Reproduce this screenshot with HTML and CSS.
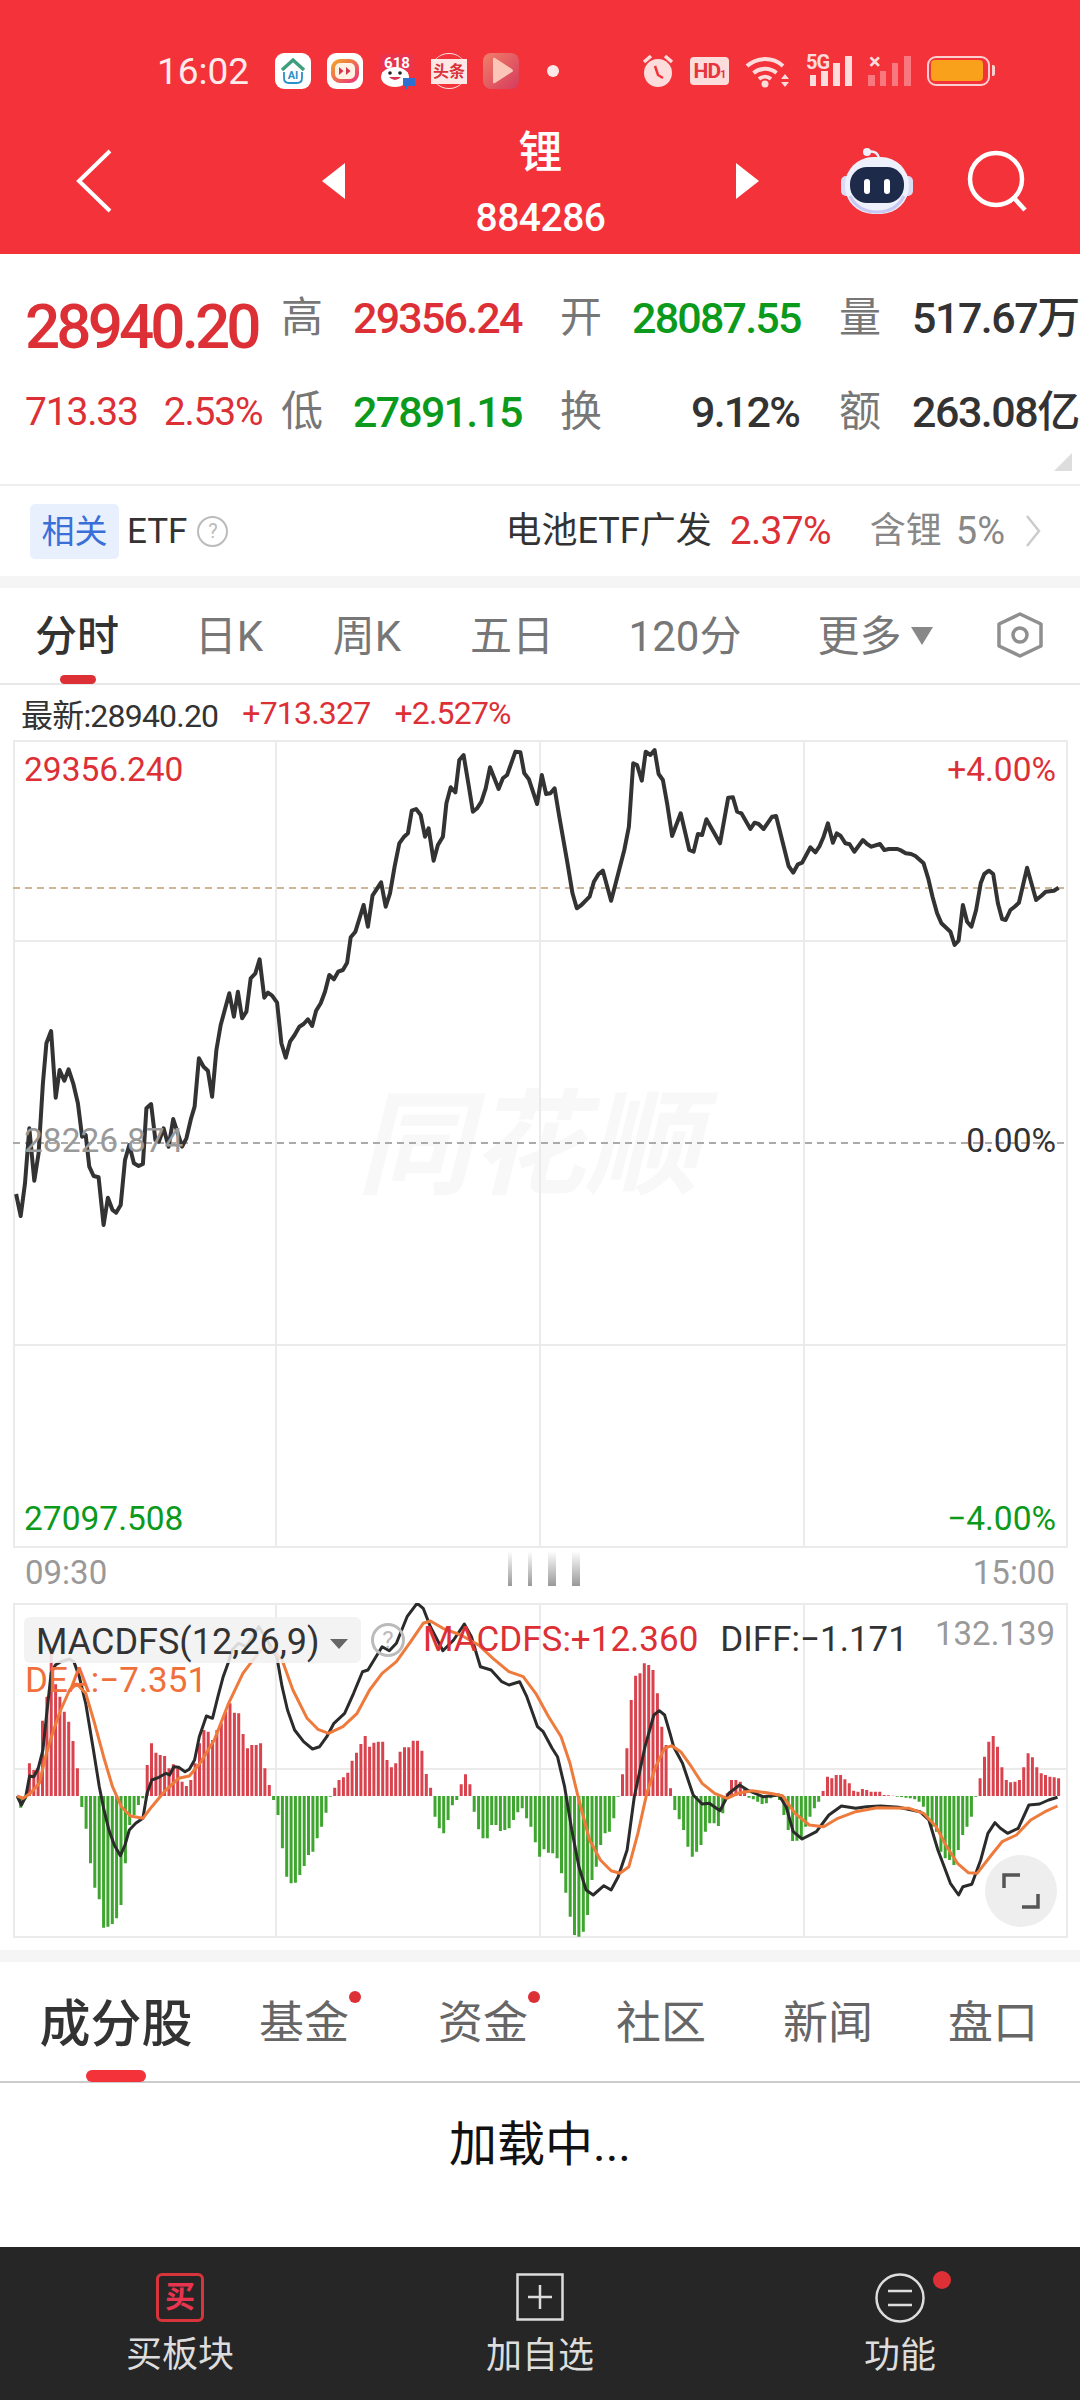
FILE: index.html
```html
<!DOCTYPE html>
<html lang="zh-CN">
  <head>
    <meta charset="UTF-8" />
    <meta name="viewport" content="width=device-width, initial-scale=1.0" />
    <title>锂 884286</title>
    <link rel="stylesheet" href="styles.css">
  </head>
  <body>
    <header class="top">
      <div class="status">
        <span class="clock">16:02</span>
        <div class="notifs">
          <svg class="app" viewBox="0 0 36 36"><rect width="36" height="36" rx="9" fill="#fff"/><path d="M7 17 18 7l11 10" fill="none" stroke="#3f9e7c" stroke-width="3.500"/><path d="M9 19v6q0 5 5 5h8q5 0 5-5v-6" fill="none" stroke="#2b8fc9" stroke-width="1.800"/><text class="app-ai" x="18" y="26" text-anchor="middle">AI</text></svg>
          <svg class="app" viewBox="0 0 36 36"><defs><linearGradient id="ring" x1="0" y1="0" x2="1" y2="1"><stop offset="0" stop-color="#f3a12a"/><stop offset="1" stop-color="#ea3a78"/></linearGradient></defs><rect width="36" height="36" rx="9" fill="#fff"/><rect x="6" y="8" width="24" height="20" rx="7" fill="#fff3e6" stroke="url(#ring)" stroke-width="4"/><path d="M12 14l4.500 4-4.500 4zM19 14l4.500 4-4.500 4z" fill="#d8344e"/></svg>
          <svg class="app" viewBox="0 0 36 36"><path d="M6 1h24q5 0 5 5v12H1V6q0-5 5-5z" fill="#e8344e"/><text class="app-618" x="18" y="15" text-anchor="middle">618</text><ellipse cx="16" cy="24" rx="14" ry="10" fill="#fff"/><path d="M3 19l6 3-5 4zM29 19l-6 3 5 4z" fill="#fff"/><circle cx="11" cy="20" r="1.800" fill="#222"/><circle cx="21" cy="20" r="1.800" fill="#222"/><path d="M10 24q6 6 12 0z" fill="#d8344e"/><rect x="24" y="25" width="12" height="8" fill="#2f6fd0"/><path d="M26 33h2v3h-2z" fill="#2f6fd0"/></svg>
          <div class="app toutiao"><span>头条</span></div>
          <svg class="app" viewBox="0 0 36 36"><defs><linearGradient id="play" x1="0" y1="0" x2="1" y2="1"><stop offset="0" stop-color="#f0806a"/><stop offset="1" stop-color="#d63a5c"/></linearGradient></defs><rect width="36" height="36" rx="8" fill="url(#play)"/><path d="M10 6q0-2 2-1l17 11q2 2 0 3L12 30q-2 1-2-1z" fill="#fbc6b8"/></svg>
          <span class="dot"></span>
        </div>
        <div class="sys">
          <svg width="32" height="34" viewBox="0 0 32 34"><circle cx="16" cy="19" r="14" fill="#fddcdc"/><path d="M13 12l3 9 5 3" fill="none" stroke="#f3323a" stroke-width="2.500"/><path d="M2 8 9 2M30 8l-7-6" stroke="#fddcdc" stroke-width="3.500"/></svg>
          <div class="hd">HD<small>1</small></div>
          <svg width="45" height="34" viewBox="0 0 45 34"><path d="M2 12a27 27 0 0 1 36 0M8.500 19a18 18 0 0 1 23 0M14 25a9.500 9.500 0 0 1 12 0" fill="none" stroke="#fddcdc" stroke-width="4"/><circle cx="20" cy="30" r="3.500" fill="#fddcdc"/><path d="M36 25l4-5 4 5zM36 28l4 5 4-5z" fill="#fddcdc"/></svg>
          <div class="sig">
            <span class="sig-tag">5G</span>
            <svg width="46" height="30" viewBox="0 0 46 30"><path d="M4 19h6v11H4zM15 15h7v15h-7zM27 7h7v23h-7zM39 0h7v30h-7z" fill="#fddcdc"/></svg>
          </div>
          <div class="sig dim">
            <span class="sig-tag">×</span>
            <svg width="43" height="30" viewBox="0 0 43 30"><path d="M0 19h7v11H0zM12 15h6v15h-6zM24 7h6v23h-6zM36 0h7v30h-7z" fill="#f9777f"/></svg>
          </div>
          <div class="battery"><span class="fill"></span></div>
        </div>
      </div>
      <nav class="nav">
        <svg class="back" width="36" height="64" viewBox="0 0 36 64"><path d="M34 2 3 32l31 30" fill="none" stroke="#fff" stroke-width="4"/></svg>
        <span class="tri tri-l"></span>
        <div class="title">
          <div class="name">锂</div>
          <div class="code">884286</div>
        </div>
        <span class="tri tri-r"></span>
        <svg class="robot" width="72" height="66" viewBox="0 0 72 66"><path d="M26 4q10-2 12 6" fill="none" stroke="#eef0fb" stroke-width="2.500"/><circle cx="26" cy="4" r="4" fill="#eef0fb"/><rect x="0" y="28" width="72" height="20" rx="5" fill="#d9dcf5"/><rect x="4" y="9" width="64" height="57" rx="28" fill="#eef0fb"/><path d="M9 48q8 16 27 16t27-16" fill="none" stroke="#c9c8f2" stroke-width="3"/><rect x="9" y="19" width="54" height="36" rx="17" fill="#1e2a4a"/><rect x="23" y="31" width="6" height="15" rx="3" fill="#fff"/><rect x="43" y="31" width="6" height="15" rx="3" fill="#fff"/></svg>
        <svg class="search" width="62" height="62" viewBox="0 0 62 62"><circle cx="29" cy="29" r="26" fill="none" stroke="#fff" stroke-width="4.500"/><path d="M48 49l10 11" stroke="#fff" stroke-width="4.500"/></svg>
      </nav>
    </header>

    <section class="quote">
      <div class="price">28940.20</div>
      <div class="lbl">高</div><div class="val red">29356.24</div>
      <div class="lbl">开</div><div class="val green">28087.55</div>
      <div class="lbl">量</div><div class="val end">517.67万</div>
      <div class="change"><span>713.33</span><span>2.53%</span></div>
      <div class="lbl">低</div><div class="val green">27891.15</div>
      <div class="lbl">换</div><div class="val dark">9.12%</div>
      <div class="lbl">额</div><div class="val end">263.08亿</div>
      <span class="corner"></span>
    </section>

    <section class="etf">
      <span class="badge">相关</span>
      <span class="etf-name">ETF</span>
      <span class="help">?</span>
      <div class="etf-right">
        <span class="etf-fund">电池ETF广发</span>
        <span class="etf-pct">2.37%</span>
        <span class="etf-has">含锂</span>
        <span class="etf-share">5%</span>
        <svg width="16" height="32" viewBox="0 0 16 32"><path d="M2 1l12 15L2 31" fill="none" stroke="#ccc" stroke-width="2.500"/></svg>
      </div>
    </section>
    <div class="band"></div>

    <section class="period-tabs">
      <span class="ptab on">分时</span>
      <span class="ptab">日K</span>
      <span class="ptab">周K</span>
      <span class="ptab">五日</span>
      <span class="ptab">120分</span>
      <span class="ptab more">更多<i></i></span>
      <span class="ptab"><svg width="46" height="46" viewBox="0 0 46 46"><path d="M23 2 44 12v22L23 44 2 34V12z" fill="none" stroke="#8f8f8f" stroke-width="3.500" stroke-linejoin="round"/><circle cx="23" cy="23" r="7" fill="none" stroke="#8f8f8f" stroke-width="3.500"/></svg></span>
    </section>

    <div class="latest">
      <span>最新:28940.20</span>
      <span class="red">+713.327</span>
      <span class="red">+2.527%</span>
    </div>

    <section class="chart">
      <div class="watermark">同花顺</div>
      <svg class="plot" viewBox="13 740 1055 808">
        <g class="grid">
          <rect x="14" y="741" width="1053" height="806"/>
          <path d="M276 740v808M540 740v808M804 740v808M13 941h1055M13 1345h1055"/>
        </g>
        <path class="dash tan" d="M13 888h1055"/>
        <path class="dash" d="M13 1143h1055"/>
        <polyline id="price-line" class="line-price"/>
      </svg>
      <span class="tag tl red">29356.240</span>
      <span class="tag tr red">+4.00%</span>
      <span class="tag ml grey">28226.874</span>
      <span class="tag mr dark">0.00%</span>
      <span class="tag bl green">27097.508</span>
      <span class="tag br green">−4.00%</span>
    </section>

    <div class="times">
      <span>09:30</span>
      <div class="grip"><i></i><i></i><i class="wide"></i><i class="wide"></i></div>
      <span>15:00</span>
    </div>

    <section class="macd">
      <svg class="plot" viewBox="13 1603 1055 335">
        <g class="grid">
          <rect x="14" y="1604" width="1053" height="333"/>
          <path d="M276 1603v335M540 1603v335M804 1603v335M13 1769h1055"/>
        </g>
        <g id="macd-bars"></g>
        <polyline id="macd-diff" class="line-diff"/>
        <polyline id="macd-dea" class="line-dea"/>
      </svg>
      <div class="macd-legend">
        <div class="macd-select">MACDFS(12,26,9)<i></i></div>
        <span class="help big">?</span>
        <span class="red macd-val">MACDFS:+12.360</span>
        <span class="macd-diff">DIFF:−1.171</span>
      </div>
      <span class="macd-dea">DEA:−7.351</span>
      <span class="macd-max">132.139</span>
      <div class="expand"><svg width="38" height="36" viewBox="0 0 38 36"><path d="M2 15V2h16M36 21v13H20" fill="none" stroke="#555" stroke-width="3.500"/></svg></div>
    </section>
    <div class="band band-low"></div>

    <section class="info-tabs">
      <span class="itab on">成分股</span>
      <span class="itab new">基金</span>
      <span class="itab new">资金</span>
      <span class="itab">社区</span>
      <span class="itab">新闻</span>
      <span class="itab">盘口</span>
    </section>

    <div class="loading">加载中...</div>

    <footer class="bottom">
      <div class="action">
        <div class="buy-icon">买</div>
        <span class="action-text">买板块</span>
      </div>
      <div class="action">
        <svg class="add-icon" width="48" height="48" viewBox="0 0 48 48"><rect x="1.500" y="1.500" width="45" height="45" fill="none" stroke="#ddd" stroke-width="2.500"/><path d="M24 12v24M12 24h24" stroke="#ddd" stroke-width="2.500"/></svg>
        <span class="action-text">加自选</span>
      </div>
      <div class="action has-dot">
        <svg width="50" height="50" viewBox="0 0 50 50"><circle cx="25" cy="25" r="23.500" fill="none" stroke="#ddd" stroke-width="2.500"/><path d="M13 18h24M13 32h24" stroke="#ddd" stroke-width="2.500"/></svg>
        <span class="action-text">功能</span>
      </div>
    </footer>

    <script src="chart.js"></script>
  </body>
</html>
```

FILE: styles.css
```css
* {
  box-sizing: border-box;
}

body {
  margin: 0;
  width: 1080px;
  height: 2400px;
  overflow: hidden;
  background: #fff;
  font-family: Roboto, "Noto Sans CJK SC", sans-serif;
  color: #222;
}

.red {
  color: #dc3036;
}

.green {
  color: #0b9a1c;
}

.dark {
  color: #333;
}

.grey {
  color: #999;
}

/* header */
.top {
  height: 254px;
  background: #f3323a;
  color: #fff;
}

.status {
  height: 108px;
  padding: 34px 87px 0 157px;
  display: flex;
  align-items: center;
}

.clock {
  width: 94px;
  font-size: 37px;
  color: #fdeaea;
}

.notifs {
  margin-left: 24px;
  display: flex;
  align-items: center;
  gap: 16px;
}

.app {
  display: block;
  width: 36px;
  height: 36px;
}

.app-ai {
  font-size: 11px;
  font-weight: 700;
  fill: #2b8fc9;
}

.app-618 {
  font-size: 15px;
  font-weight: 700;
  fill: #fff;
}

.toutiao {
  border-radius: 50%;
  border-top: 1px solid #fde0e0;
  border-bottom: 1px solid #fde0e0;
  display: flex;
  align-items: center;
  justify-content: center;
}

.toutiao span {
  width: 100%;
  background: #fde8e8;
  text-align: center;
  font-size: 16px;
  font-weight: 700;
  line-height: 25px;
  color: #d8343c;
  white-space: nowrap;
}

.dot {
  width: 12px;
  height: 12px;
  margin-left: 12px;
  border-radius: 50%;
  background: #fde8e8;
}

.sys {
  margin-left: auto;
  display: flex;
  align-items: center;
  gap: 16px;
}

.hd {
  width: 39px;
  height: 28px;
  border-radius: 4px;
  background: #fddcdc;
  color: #e8343c;
  font-size: 21px;
  font-weight: 700;
  line-height: 28px;
  text-align: center;
  letter-spacing: -1px;
  white-space: nowrap;
}

.hd small {
  font-size: 11px;
}

.sig {
  position: relative;
  display: flex;
}

.sig-tag {
  position: absolute;
  left: 0;
  top: -2px;
  font-size: 20px;
  font-weight: 700;
  line-height: 16px;
  color: #fddcdc;
  letter-spacing: -1px;
}

.sig.dim .sig-tag {
  left: 1px;
  font-size: 22px;
}

.battery {
  position: relative;
  width: 63px;
  height: 30px;
  border: 2.500px solid #fbd0d0;
  border-radius: 9px;
  padding: 2px;
  margin-right: 3px;
}

.battery::after {
  content: "";
  position: absolute;
  right: -7px;
  top: 7px;
  width: 3px;
  height: 11px;
  border-radius: 0 2px 2px 0;
  background: #fbd0d0;
}

.fill {
  display: block;
  width: 52px;
  height: 21px;
  border-radius: 4px;
  background: #f9a11b;
}

.nav {
  height: 146px;
  padding-left: 76px;
  display: flex;
  align-items: center;
}

.tri {
  width: 0;
  height: 0;
  border-top: 18px solid transparent;
  border-bottom: 18px solid transparent;
}

.tri-l {
  margin-left: 210px;
  border-right: 23px solid #fff;
}

.tri-r {
  border-left: 23px solid #fff;
}

.title {
  width: 391px;
  text-align: center;
}

.name {
  font-size: 44px;
  font-weight: 500;
  line-height: 56px;
}

.code {
  margin-top: 17px;
  font-size: 39px;
  font-weight: 500;
  line-height: 40px;
  letter-spacing: -0.500px;
}

.robot {
  margin-left: 82px;
}

.search {
  margin-left: 54px;
}

/* quote panel */
.quote {
  position: relative;
  height: 232px;
  padding: 17px 0 0 25px;
  border-bottom: 2px solid #eee;
  display: grid;
  grid-template-columns: 256px 72px 207px 72px 207px 73px 1fr;
  grid-template-rows: 94px 94px;
  align-items: center;
}

.price {
  font-size: 62px;
  font-weight: 500;
  letter-spacing: -3.900px;
  color: #dc3036;
  line-height: 60px;
  padding-top: 18px;
}

.change {
  display: flex;
  gap: 26px;
  font-size: 39px;
  letter-spacing: -1.200px;
  color: #dc3036;
}

.lbl {
  font-size: 42px;
  color: #777;
  line-height: 50px;
}

.val {
  font-size: 43px;
  font-weight: 500;
  letter-spacing: -1.800px;
  line-height: 50px;
  text-align: right;
  padding-right: 40px;
  white-space: nowrap;
}

.val.end {
  padding: 0;
  text-align: left;
  letter-spacing: -1.500px;
  color: #333;
}

.corner {
  position: absolute;
  right: 8px;
  bottom: 13px;
  width: 0;
  height: 0;
  border-left: 18px solid transparent;
  border-bottom: 18px solid #ddd;
}

/* etf row */
.etf {
  height: 90px;
  padding: 0 39px 0 30px;
  display: flex;
  align-items: center;
}

.badge {
  width: 89px;
  height: 55px;
  border-radius: 5px;
  background: #e8f0fd;
  color: #3a6fd8;
  font-size: 33px;
  line-height: 55px;
  text-align: center;
}

.etf-name {
  margin-left: 8px;
  font-size: 35px;
  color: #333;
}

.help {
  width: 31px;
  height: 31px;
  margin-left: 10px;
  border: 2px solid #bbb;
  border-radius: 50%;
  color: #bbb;
  font-size: 20px;
  line-height: 27px;
  text-align: center;
}

.etf-right {
  margin-left: auto;
  display: flex;
  align-items: center;
}

.etf-fund {
  font-size: 36px;
  line-height: 50px;
  color: #333;
}

.etf-pct {
  margin-left: 18px;
  font-size: 39px;
  letter-spacing: -0.700px;
  line-height: 50px;
  color: #dc3036;
}

.etf-has {
  margin-left: 39px;
  font-size: 36px;
  line-height: 50px;
  color: #888;
}

.etf-share {
  margin-left: 14px;
  font-size: 38px;
  line-height: 50px;
  color: #888;
}

.etf-right svg {
  margin-left: 20px;
}

.band {
  height: 12px;
  background: #f5f5f5;
}

/* period tabs */
.period-tabs {
  height: 97px;
  padding-top: 3px;
  border-bottom: 2px solid #e8e8e8;
  display: grid;
  grid-template-columns: 154px 150px 126px 164px 182px 198px 92px;
  align-items: center;
}

.ptab {
  position: relative;
  height: 60px;
  font-size: 42px;
  line-height: 60px;
  color: #777;
  text-align: center;
  white-space: nowrap;
}

.ptab.on {
  color: #333;
  font-weight: 500;
}

.ptab.on::after {
  content: "";
  position: absolute;
  left: 60px;
  bottom: -17px;
  width: 36px;
  height: 9px;
  border-radius: 5px;
  background: #dc3036;
}

.ptab svg {
  display: block;
  margin: 5px auto 0;
}

.more i {
  display: inline-block;
  margin-left: 9px;
  vertical-align: 6px;
  border-top: 18px solid #888;
  border-left: 11px solid transparent;
  border-right: 11px solid transparent;
}

.latest {
  height: 55px;
  padding-left: 21px;
  display: flex;
  align-items: center;
  gap: 24px;
  font-size: 32px;
  letter-spacing: -0.800px;
  color: #333;
}

/* charts */
.chart {
  position: relative;
  height: 808px;
  margin-left: 13px;
  width: 1055px;
}

.plot {
  position: absolute;
  inset: 0;
  display: block;
  width: 100%;
  height: 100%;
}

.grid rect,
.grid path {
  fill: none;
  stroke: #ebebeb;
  stroke-width: 2;
}

.dash {
  stroke: #aaa;
  stroke-width: 2;
  stroke-dasharray: 7 5;
}

.dash.tan {
  stroke: #cdb595;
}

.line-price {
  fill: none;
  stroke: #333;
  stroke-width: 4;
  stroke-linejoin: round;
}

.line-diff {
  fill: none;
  stroke: #2b2b2b;
  stroke-width: 3;
  stroke-linejoin: round;
}

.line-dea {
  fill: none;
  stroke: #ee7a3c;
  stroke-width: 3;
  stroke-linejoin: round;
}

.watermark {
  position: absolute;
  left: 344px;
  top: 341px;
  font-size: 114px;
  font-weight: 700;
  font-style: italic;
  line-height: 130px;
  color: #f8f8f8;
  white-space: nowrap;
}

.tag {
  position: absolute;
  font-size: 33.500px;
  line-height: 40px;
  white-space: nowrap;
}

.tl,
.ml,
.bl {
  left: 11px;
}

.tr,
.mr,
.br {
  right: 12px;
}

.tl,
.tr {
  top: 10px;
}

.ml,
.mr {
  top: 381px;
}

.bl,
.br {
  top: 759px;
}

.times {
  position: relative;
  height: 55px;
  padding: 0 25px 6px 25px;
  display: flex;
  justify-content: space-between;
  align-items: center;
  font-size: 33px;
  color: #999;
}

.grip {
  position: absolute;
  left: 508px;
  top: 3px;
  height: 35px;
  display: flex;
  gap: 16px;
}

.grip i {
  width: 4px;
  background: linear-gradient(to bottom, rgba(150, 150, 150, 0), #999);
}

.grip i.wide {
  width: 8px;
}

.macd {
  position: relative;
  height: 335px;
  margin-left: 13px;
  width: 1055px;
}

.macd-legend {
  position: absolute;
  left: 11px;
  top: 12px;
  display: flex;
  align-items: center;
  font-size: 35px;
  white-space: nowrap;
}

.macd-select {
  width: 337px;
  height: 46px;
  padding-left: 12px;
  border-radius: 6px;
  background: rgba(241, 241, 241, 0.88);
  font-size: 36px;
  line-height: 50px;
  color: #333;
}

.macd-select i {
  display: inline-block;
  margin-left: 10px;
  vertical-align: 5px;
  border-top: 10px solid #666;
  border-left: 9px solid transparent;
  border-right: 9px solid transparent;
}

.help.big {
  width: 34px;
  height: 34px;
  margin-left: 10px;
  border-width: 3px;
  font-size: 24px;
  line-height: 28px;
}

.macd-val {
  margin-left: 18px;
  line-height: 50px;
}

.macd-diff {
  margin-left: 22px;
  line-height: 50px;
  color: #333;
}

.macd-dea {
  position: absolute;
  left: 12px;
  top: 55px;
  font-size: 35px;
  line-height: 46px;
  color: #f0703c;
}

.macd-max {
  position: absolute;
  right: 13px;
  top: 9px;
  font-size: 33px;
  line-height: 44px;
  color: #999;
}

.expand {
  position: absolute;
  left: 972px;
  top: 252px;
  width: 72px;
  height: 72px;
  border-radius: 50%;
  background: #eee;
  display: flex;
  align-items: center;
  justify-content: center;
}

.band-low {
  margin-top: 12px;
}

/* lower tabs */
.info-tabs {
  height: 121px;
  padding-bottom: 4px;
  border-bottom: 2px solid #ccc;
  position: relative;
  display: grid;
  grid-template-columns: 232px 144px 214px 142px 192px 138px;
  align-items: center;
}

.itab {
  position: relative;
  font-size: 45px;
  color: #666;
  text-align: center;
  white-space: nowrap;
}

.itab.on {
  font-size: 51px;
  font-weight: 500;
  color: #333;
}

.itab.on::after {
  content: "";
  position: absolute;
  left: 86px;
  bottom: -25px;
  width: 60px;
  height: 12px;
  border-radius: 6px;
  background: #f3323a;
}

.itab.new::after {
  content: "";
  position: absolute;
  left: calc(50% + 45px);
  top: 4px;
  width: 12px;
  height: 12px;
  border-radius: 50%;
  background: #dc3036;
}

.loading {
  height: 164px;
  padding-top: 26px;
  text-align: center;
  font-size: 48px;
  line-height: 72px;
  color: #111;
}

/* footer */
.bottom {
  height: 153px;
  padding-top: 26px;
  background: #262626;
  display: grid;
  grid-template-columns: repeat(3, 360px);
}

.action {
  position: relative;
  display: flex;
  flex-direction: column;
  align-items: center;
}

.action svg,
.buy-icon {
  display: block;
  flex: none;
}

.add-icon {
  margin-bottom: 2px;
}

.buy-icon {
  width: 48px;
  height: 49px;
  border: 3px solid #d8343c;
  border-radius: 6px;
  color: #e8344e;
  font-size: 30px;
  font-weight: 700;
  line-height: 42px;
  text-align: center;
}

.action-text {
  margin-top: 10px;
  font-size: 36px;
  line-height: 46px;
  color: #ddd;
}

.has-dot::after {
  content: "";
  position: absolute;
  left: 213px;
  top: -2px;
  width: 18px;
  height: 18px;
  border-radius: 50%;
  background: #dc3036;
}
```

FILE: chart.js
```js
// points are read off the reference crops: x in crop px (2.8 per page px), y in crop px (3 per page px)
const priceA = [45,1392,58,1458,70,1360,82,1195,96,1352,108,1270,120,1060,130,940,143,903,156,1103,167,1020,180,1052,192,1018,205,1060,218,1120,230,1220,240,1215,250,1310,262,1338,276,1342,290,1485,302,1403,315,1440,325,1448,338,1425,350,1290,362,1245,375,1300,388,1308,400,1302,410,1135,423,1122,435,1230,445,1235,458,1195,472,1250,485,1167,510,1250,522,1225,535,1165,545,1130,557,985,570,1010,582,1022,594,1100,606,960,618,885,642,790,655,860,666,785,678,865,690,845,702,745,715,730,727,688,740,803,750,788,762,797,776,818,788,940,800,983,812,935,825,915,838,890,850,882,862,868,874,888,885,842,898,820,910,785,922,735,935,748,947,725,960,720,972,698,982,622,995,605,1018,525,1030,590,1043,497,1067,457,1080,530,1092,490,1105,410,1118,340,1130,322,1142,310,1153,242,1165,237,1178,255,1190,320,1200,295,1214,392,1226,345,1240,320,1250,220,1262,172,1275,187,1286,90,1298,75,1312,165,1324,245,1336,235,1348,215,1360,175,1372,112,1396,177,1408,145,1420,135,1443,65,1457,67];
const priceB = [12,130,25,148,48,222,61,135,73,192,85,190,97,175,110,260,133,400,147,490,159,535,172,525,195,500,207,455,220,432,232,422,255,512,268,460,292,360,305,290,317,100,328,105,341,152,352,65,365,75,377,60,388,132,400,150,412,220,426,318,450,250,474,360,486,365,498,312,510,315,522,268,560,340,583,203,596,202,608,245,620,250,645,297,657,278,668,282,682,297,706,260,717,258,752,408,765,428,778,403,790,398,813,352,827,367,838,350,850,320,862,280,876,338,887,310,898,318,911,340,923,343,936,365,960,330,972,342,984,350,1008,342,1020,360,1033,357,1057,357,1068,362,1080,370,1095,372,1107,378,1130,400,1143,445,1155,500,1168,550,1180,580,1205,605,1217,645,1228,632,1240,525,1252,575,1264,590,1277,540,1290,460,1300,432,1313,422,1325,432,1338,520,1350,567,1360,570,1373,540,1385,530,1397,518,1420,413,1445,510,1460,497,1472,485,1495,482,1508,473];

const diffA = [48,798,60,825,72,800,83,738,95,740,107,715,120,660,130,560,143,430,155,405,170,395,195,387,207,395,222,440,240,520,260,650,278,770,290,835,305,900,320,945,337,977,350,945,362,900,380,880,400,865,412,790,425,750,445,742,465,730,475,735,487,710,500,712,518,725,530,718,545,690,558,620,578,558,595,565,610,500,625,440,640,395,650,360,668,340,690,350,725,290,750,335,775,380,790,470,805,540,825,600,850,635,875,657,895,650,915,620,935,580,965,550,990,490,1015,425,1030,420,1070,350,1090,362,1110,340,1140,260,1168,220,1185,235,1205,290,1240,362,1270,330,1300,282,1320,320,1345,410,1375,420,1405,455,1425,465,1455,455,1475,500,1505,590];
const diffB = [65,605,90,655,105,680,125,770,145,900,165,1010,185,1080,205,1095,235,1067,255,1080,275,1040,300,960,320,800,350,650,375,555,390,542,405,555,420,610,430,650,455,700,485,795,510,822,530,820,560,842,585,790,615,765,640,782,680,800,725,795,745,830,765,905,790,927,830,905,865,855,900,828,940,835,970,830,1010,828,1060,832,1120,845,1145,870,1170,960,1205,1060,1228,1095,1240,1070,1265,1063,1290,990,1310,910,1330,878,1345,895,1365,910,1395,895,1425,825,1455,822,1480,810,1505,802];

const deaA = [48,798,65,805,85,790,110,760,130,670,150,600,170,540,195,480,215,462,240,490,265,580,290,680,315,770,340,830,365,858,400,865,425,830,460,785,500,745,530,738,560,700,600,630,640,520,680,430,730,360,760,355,790,390,820,480,860,565,890,598,920,610,960,590,1000,550,1035,480,1070,430,1110,395,1150,335,1185,280,1205,273,1240,295,1290,315,1340,345,1380,385,1425,425,1465,440,1500,490];
const deaB = [80,560,115,620,140,700,165,810,195,930,225,990,255,1022,280,1030,305,1010,330,910,355,790,380,710,405,655,425,647,450,665,480,710,510,760,545,790,580,805,610,790,650,782,700,790,735,797,770,850,810,885,850,890,890,865,940,845,1000,833,1090,835,1130,850,1165,890,1195,950,1225,1000,1255,1028,1280,1030,1320,975,1350,935,1390,915,1430,870,1470,845,1505,828];

// end of each histogram bar, crop px, zero line is 798
const bars = [833,808,700,720,715,572,500,370,463,500,545,575,633,715,831,896,1000,1073,1108,1193,1190,1182,1165,1125,1000,885,855,825,805,705,640,668,675,678,715,703,715,755,768,750,700,640,600,605,630,600,580,545,520,548,550,612,655,645,645,640,715,765,810,855,955,1040,1060,1058,1035,1008,975,965,925,890,848,800,773,750,742,728,692,668,642,618,650,638,635,635,690,712,700,665,652,652,632,632,662,732,773,860,895,910,870,826,810,763,733,763,845,898,925,925,885,885,903,900,895,870,847,835,865,890,937,980,958,968,970,985,1030,1088,1160,1215,1220,1205,1155,1050,1010,945,910,905,865,800,733,655,510,437,430,400,405,420,490,590,645,775,840,868,900,950,980,965,945,905,880,880,888,850,790,750,750,755,775,803,808,815,822,820,805,800,810,855,900,933,932,925,890,860,835,815,783,740,745,735,735,748,760,782,785,777,780,785,785,785,795,796,797,800,801,803,805,808,815,830,860,890,905,965,985,990,1005,960,915,890,860,800,745,680,635,618,650,712,750,757,755,750,712,670,682,712,730,735,740,742,745];

function toPoints(list, offsetX, top) {
  const out = [];
  for (let i = 0; i < list.length; i += 2) {
    out.push((list[i] / 2.8 + offsetX).toFixed(1) + "," + (list[i + 1] / 3 + top).toFixed(1));
  }
  return out;
}

function setLine(id, partA, partB, top) {
  const points = toPoints(partA, 0, top).concat(toPoints(partB, 520, top));
  document.getElementById(id).setAttribute("points", points.join(" "));
}

setLine("price-line", priceA, priceB, 730);
setLine("macd-diff", diffA, diffB, 1530);
setLine("macd-dea", deaA, deaB, 1530);

const barGroup = document.getElementById("macd-bars");
const step = (1058.6 - 20.7) / (bars.length - 1);
let barPaths = { up: "", down: "" };
bars.forEach((end, i) => {
  const x = (20.7 + i * step - 1.5).toFixed(1);
  const y = 1530 + end / 3;
  const key = end < 798 ? "up" : "down";
  barPaths[key] += "M" + x + " 1796V" + y.toFixed(1) + "h3V1796z";
});
[["up", "#d9434d"], ["down", "#3ea52e"]].forEach(([key, color]) => {
  const path = document.createElementNS("http://www.w3.org/2000/svg", "path");
  path.setAttribute("d", barPaths[key]);
  path.setAttribute("fill", color);
  barGroup.appendChild(path);
});
```
